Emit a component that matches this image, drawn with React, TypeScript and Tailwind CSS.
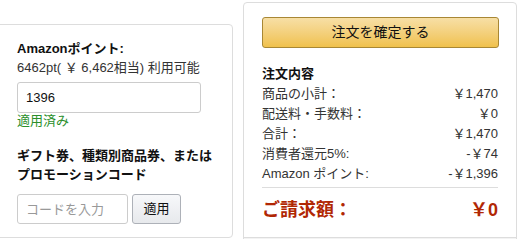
const font = {
  fontFamily: '"Liberation Sans", Arial, "Noto Sans CJK JP", sans-serif',
};

function Row({ label, value }: { label: string; value: string }) {
  return (
    <div className="flex justify-between leading-[20px] text-[13px] text-[#333]">
      <span>{label}</span>
      <span>{value}</span>
    </div>
  );
}

export default function App() {
  return (
    <div
      className="flex items-start w-[521px] h-[239px] overflow-hidden bg-white text-[#111]"
      style={font}
    >
      <div className="-ml-[8px] mt-[24px] w-[241px] h-[214px] shrink-0 rounded-[4px] border border-[#ddd] pl-[24px] pt-[14px]">
        <div className="text-[13px] font-bold leading-[19px]">Amazonポイント:</div>
        <div className="text-[13px] leading-[19px] text-[#333]">
          6462pt( ￥ 6,462相当) 利用可能
        </div>
        <input
          className="mt-[5px] w-[184px] h-[31px] rounded-[3px] border border-[#ccc] px-[8px] text-[13px] text-[#111] outline-none"
          defaultValue="1396"
        />
        <div className="text-[13px] leading-[16px] text-[#2b8f2b]">適用済み</div>
        <div className="mt-[17px] text-[13px] font-bold leading-[19px] text-[#111]">
          ギフト券、種類別商品券、または
          <br />
          プロモーションコード
        </div>
        <div className="mt-[10px] flex gap-[4px]">
          <input
            className="w-[111px] h-[30px] rounded-[3px] border border-[#ccc] px-[8px] text-[13px] outline-none placeholder:text-[#999]"
            placeholder="コードを入力"
          />
          <button className="w-[49px] h-[30px] rounded-[3px] border border-[#adb1b8] bg-gradient-to-b from-[#f7f8fa] to-[#e7e9ec] text-[13px] text-[#111]">
            適用
          </button>
        </div>
      </div>

      <div className="ml-[10px] mt-[2px] w-[274px] h-[260px] shrink-0 rounded-[4px] border border-[#ddd] flex flex-col">
        <div className="px-[18px] pt-[14px]">
          <button className="w-[237px] h-[31px] rounded-[3px] border border-[#a88734] bg-gradient-to-b from-[#f7dfa5] to-[#f0c14b] text-[14px] text-[#111]">
            注文を確定する
          </button>
          <div className="mt-[16px] text-[13px] font-bold leading-[19px]">注文内容</div>
          <div className="mt-[1px]">
            <Row label="商品の小計：" value="￥1,470" />
            <Row label="配送料・手数料：" value="￥0" />
            <Row label="合計：" value="￥1,470" />
            <Row label="消費者還元5%:" value="-￥74" />
            <Row label="Amazon ポイント:" value="-￥1,396" />
          </div>
          <div className="mt-[3px] border-t border-[#ddd]" />
          <div className="mt-[10px] flex justify-between text-[18px] font-bold leading-[24px] text-[#b12704]">
            <span>ご請求額：</span>
            <span>￥0</span>
          </div>
        </div>
        <div className="mt-[15px] flex-1 border-t border-[#ddd] bg-[#f3f3f3]" />
      </div>
    </div>
  );
}
